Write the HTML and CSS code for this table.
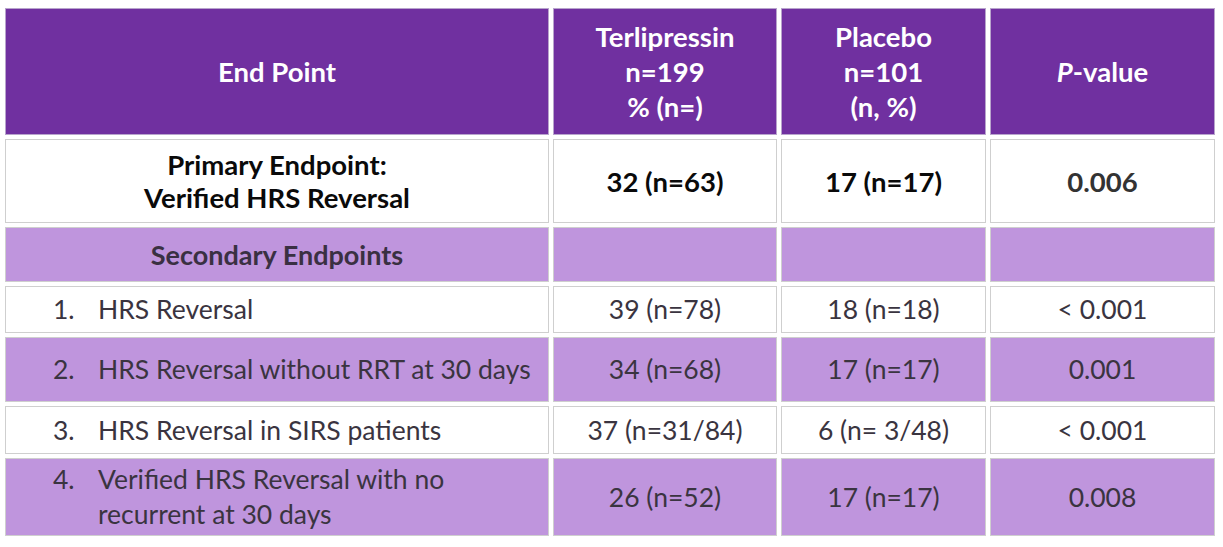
FILE: index.html
```html
<!DOCTYPE html>
<html lang="en">
<head>
<meta charset="utf-8">
<title>Endpoints</title>
<link rel="stylesheet" href="styles.css">
</head>
<body>
<table class="results">
  <colgroup>
    <col class="c-end">
    <col class="c-terli">
    <col class="c-plac">
    <col class="c-p">
  </colgroup>
  <thead>
    <tr class="r-head">
      <th>End Point</th>
      <th>Terlipressin<br>n=199<br>% (n=)</th>
      <th>Placebo<br>n=101<br>(n, %)</th>
      <th><i>P</i>-value</th>
    </tr>
  </thead>
  <tbody>
    <tr class="r-primary">
      <td>Primary Endpoint:<br>Verified HRS Reversal</td>
      <td>32 (n=63)</td>
      <td>17 (n=17)</td>
      <td class="pval">0.006</td>
    </tr>
    <tr class="r-secondary shade">
      <td class="sec-title">Secondary Endpoints</td>
      <td></td>
      <td></td>
      <td></td>
    </tr>
    <tr class="r-1">
      <td class="item"><span class="num">1.</span><span class="txt">HRS Reversal</span></td>
      <td>39 (n=78)</td>
      <td>18 (n=18)</td>
      <td>&lt; 0.001</td>
    </tr>
    <tr class="r-2 shade">
      <td class="item"><span class="num">2.</span><span class="txt">HRS Reversal without RRT at 30 days</span></td>
      <td>34 (n=68)</td>
      <td>17 (n=17)</td>
      <td>0.001</td>
    </tr>
    <tr class="r-3">
      <td class="item"><span class="num">3.</span><span class="txt">HRS Reversal in SIRS patients</span></td>
      <td>37 (n=31/84)</td>
      <td>6 (n= 3/48)</td>
      <td>&lt; 0.001</td>
    </tr>
    <tr class="r-4 shade">
      <td class="item"><span class="num">4.</span><span class="txt">Verified HRS Reversal with no<br>recurrent at 30 days</span></td>
      <td>26 (n=52)</td>
      <td>17 (n=17)</td>
      <td>0.008</td>
    </tr>
  </tbody>
</table>
</body>
</html>
```

FILE: styles.css
```css
html, body {
  margin: 0;
  padding: 0;
  background: #ffffff;
}

.results {
  margin: 4px 0 0 1px;
  border-collapse: separate;
  border-spacing: 4px 4px;
  table-layout: fixed;
  font-family: Lato, "Open Sans", "Liberation Sans", sans-serif;
  font-size: 26.5px;
  color: #3a3440;
}

.c-end { width: 544px; }
.c-terli { width: 224px; }
.c-plac { width: 205px; }
.c-p { width: 225px; }

.results th,
.results td {
  border: 1px solid #cfcfcf;
  padding: 0;
  text-align: center;
  vertical-align: middle;
  line-height: 35px;
}

.results th {
  background: #7030a0;
  color: #ffffff;
  font-weight: 700;
  font-size: 27.5px;
  border-color: #b8a4cc;
}

.results th i {
  font-style: italic;
}

.r-head { height: 127px; }
.r-primary { height: 84px; }
.r-secondary { height: 55px; }
.r-1 { height: 47px; }
.r-2 { height: 65px; }
.r-3 { height: 48px; }
.r-4 { height: 78px; }

.r-primary td {
  font-weight: 700;
  font-size: 27.5px;
  color: #0a0a0a;
  line-height: 33px;
}

.r-primary td.pval {
  color: #333333;
}

.shade td {
  background: #bf95dd;
}

.sec-title {
  font-weight: 700;
  font-size: 27px;
  color: #3a3042;
}

.results td.item {
  text-align: left;
}

.item .num {
  display: inline-block;
  width: 45px;
  margin-left: 47px;
  vertical-align: top;
}

.item .txt {
  display: inline-block;
  width: 450px;
  white-space: nowrap;
  vertical-align: top;
}
```
